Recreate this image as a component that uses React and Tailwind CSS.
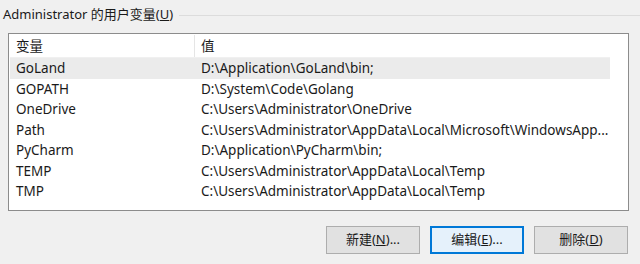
import React from 'react';

const rows = [
  ['GoLand', 'D:\\Application\\GoLand\\bin;'],
  ['GOPATH', 'D:\\System\\Code\\Golang'],
  ['OneDrive', 'C:\\Users\\Administrator\\OneDrive'],
  ['Path', 'C:\\Users\\Administrator\\AppData\\Local\\Microsoft\\WindowsApp...'],
  ['PyCharm', 'D:\\Application\\PyCharm\\bin;'],
  ['TEMP', 'C:\\Users\\Administrator\\AppData\\Local\\Temp'],
  ['TMP', 'C:\\Users\\Administrator\\AppData\\Local\\Temp'],
];

const font = { fontFamily: '"Noto Sans", "Noto Sans CJK SC", sans-serif' };

const Btn = ({ label, hot, rest, active }) => (
  <button
    className={
      active
        ? 'w-[94px] h-[28px] bg-[#e5f1fb] border-2 border-[#0078d7] text-[13px] text-[#1a1a1a] flex items-center justify-center'
        : 'w-[94px] h-[28px] bg-[#e1e1e1] border border-[#adadad] text-[13px] text-[#1a1a1a] flex items-center justify-center'
    }
  >
    {label}(<span className="underline">{hot}</span>){rest}
  </button>
);

export default function App() {
  return (
    <div className="w-[640px] h-[264px] bg-[#f0f0f0] overflow-hidden text-[#1a1a1a]" style={font}>
      <div className="flex items-center h-[28px] pl-[3px] pt-[2px]">
        <span className="text-[13px] whitespace-nowrap">
          Administrator 的用户变量(<span className="underline">U</span>)
        </span>
        <div className="flex-1 h-px bg-[#dcdcdc] ml-[6px]" />
      </div>

      <div className="ml-[8px] mt-[5px] w-[621px] h-[178px] bg-white border border-[#8c8c8c] pt-px pl-px">
        <div className="w-[600px] flex h-[23px] items-center text-[13.5px] border-b border-[#f0f0f0]">
          <div className="w-[185px] shrink-0 pl-[6px] border-r border-[#e5e5e5] h-full flex items-center">变量</div>
          <div className="pl-[6px]">值</div>
        </div>
        {rows.map(([k, v], i) => (
          <div
            key={k}
            className={
              i === 0
                ? 'w-[600px] flex h-[20.5px] items-center text-[13.5px] bg-[#ebebeb] overflow-hidden'
                : 'w-[600px] flex h-[20.5px] items-center text-[13.5px] overflow-hidden'
            }
          >
            <div className="w-[186px] shrink-0 pl-[6px] whitespace-nowrap">{k}</div>
            <div className="pl-[5px] whitespace-nowrap">{v}</div>
          </div>
        ))}
      </div>

      <div className="flex justify-end gap-[10px] pr-[12px] mt-[15px]">
        <Btn label="新建" hot="N" rest="..." />
        <Btn label="编辑" hot="E" rest="..." active />
        <Btn label="删除" hot="D" rest="" />
      </div>
    </div>
  );
}
